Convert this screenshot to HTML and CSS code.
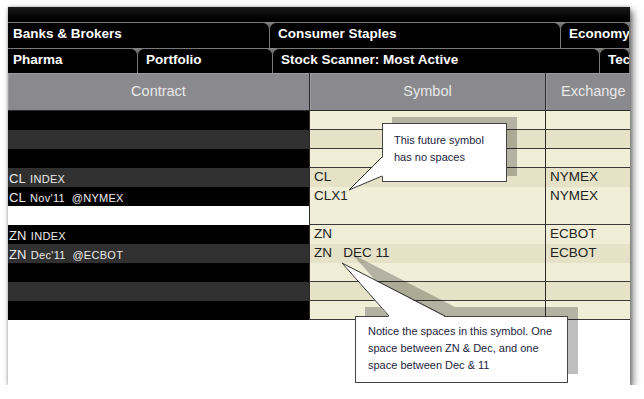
FILE: index.html
```html
<!DOCTYPE html>
<html lang="en">
<head>
    <meta charset="UTF-8">
    <title>Futures symbols</title>
    <link rel="stylesheet" href="styles.css">
</head>
<body>
    <div class="shot">
        <div class="topbar"></div>

        <div class="tabs">
            <div class="tab first w-banks">Banks &amp; Brokers</div>
            <div class="tab w-consumer">Consumer Staples</div>
            <div class="tab w-rest">Economy</div>
        </div>
        <div class="tabs tabs-2">
            <div class="tab first w-pharma">Pharma</div>
            <div class="tab w-portfolio">Portfolio</div>
            <div class="tab w-scanner">Stock Scanner: Most Active</div>
            <div class="tab w-rest">Tec</div>
        </div>

        <div class="grid-head">
            <div class="hcell">Contract</div>
            <div class="hcell">Symbol</div>
            <div class="hcell h-exc">Exchange</div>
        </div>

        <div class="grid-body">
            <div class="row"><div class="c-con"></div><div class="c-sym"></div><div class="c-exc"></div></div>
            <div class="row alt"><div class="c-con"></div><div class="c-sym"></div><div class="c-exc"></div></div>
            <div class="row"><div class="c-con"></div><div class="c-sym"></div><div class="c-exc"></div></div>
            <div class="row alt"><div class="c-con"><span class="big">CL</span> <span class="small">INDEX</span></div><div class="c-sym">CL</div><div class="c-exc">NYMEX</div></div>
            <div class="row"><div class="c-con"><span class="big">CL</span> <span class="small">Nov'11  @NYMEX</span></div><div class="c-sym">CLX1</div><div class="c-exc">NYMEX</div></div>
            <div class="row sel"><div class="c-con"></div><div class="c-sym"></div><div class="c-exc"></div></div>
            <div class="row"><div class="c-con"><span class="big">ZN</span> <span class="small">INDEX</span></div><div class="c-sym">ZN</div><div class="c-exc">ECBOT</div></div>
            <div class="row alt"><div class="c-con"><span class="big">ZN</span> <span class="small">Dec'11  @ECBOT</span></div><div class="c-sym">ZN   DEC 11</div><div class="c-exc">ECBOT</div></div>
            <div class="row"><div class="c-con"></div><div class="c-sym"></div><div class="c-exc"></div></div>
            <div class="row alt"><div class="c-con"></div><div class="c-sym"></div><div class="c-exc"></div></div>
            <div class="row"><div class="c-con"></div><div class="c-sym"></div><div class="c-exc"></div></div>
        </div>

        <!-- callouts drawn over the grid -->
        <div class="note note-1">This future symbol<br>has no spaces</div>
        <div class="note note-2">Notice the spaces in this symbol. One<br>space between ZN &amp; Dec, and one<br>space between Dec &amp; 11</div>

        <svg class="pointers" width="622" height="378" viewBox="0 0 622 378">
            <polygon points="344,247 391,300 447,300" fill="rgba(0,0,0,0.25)"/>
            <polygon points="375,150 341,183 375,169" fill="#fff"/>
            <polyline points="374,150 341,183 374,169" fill="none" stroke="#333" stroke-width="1"/>
            <polygon points="381,310 334,256 437,310" fill="#fff"/>
            <polyline points="381,309 334,256 437,309" fill="none" stroke="#333" stroke-width="1"/>
        </svg>
    </div>
</body>
</html>
```

FILE: styles.css
```css
body {
    margin: 0;
    background: #fff;
    font-family: "Liberation Sans", Arial, sans-serif;
}
.shot {
    position: relative;
    margin: 7px 0 0 8px;
    width: 622px;
    height: 378px;
    overflow: hidden;
    background: #fff;
    box-shadow: 3px 4px 7px rgba(0,0,0,0.55), 0 0 3px rgba(0,0,0,0.3);
}
.topbar {
    height: 15px;
    background: linear-gradient(#1c1c1c, #000 12px);
}
.tabs {
    display: flex;
    height: 26px;
    background: linear-gradient(#8c8c8c, #555 5px, #000 8px);
}
.tabs-2 {
    height: 25px;
}
.tab {
    flex: none;
    box-sizing: border-box;
    height: 100%;
    margin-left: -1px;
    padding: 3px 0 0 8px;
    border: 1px solid #7a7a7a;
    border-bottom: none;
    border-radius: 7px 7px 0 0;
    background: #000;
    color: #fff;
    font-weight: bold;
    font-size: 13.5px;
    white-space: nowrap;
    overflow: hidden;
}
.tab.first {
    margin-left: 0;
    padding-left: 5px;
    border-left: none;
    border-top-left-radius: 0;
}
.w-banks { width: 262px; }
.w-consumer { width: 292px; }
.w-pharma { width: 130px; }
.w-portfolio { width: 136px; }
.w-scanner { width: 328px; }
.w-rest { flex: 1; }

.grid-head {
    display: grid;
    grid-template-columns: 301px 236px 1fr;
    height: 37px;
    background: #8a8a8e;
    border-bottom: 1px solid #2a2a2a;
}
.hcell {
    border-left: 1px solid #2a2a2a;
    color: #e8e8e8;
    font-size: 14.5px;
    line-height: 37px;
    text-align: center;
    box-shadow: inset 1px 1px 0 #9c9ca0;
}
.hcell:first-child {
    border-left: none;
}
.h-exc {
    text-align: left;
    padding-left: 15px;
}
.row {
    display: grid;
    grid-template-columns: 301px 236px 1fr;
    height: 19px;
}
.c-con {
    background: #000;
    color: #ececec;
    padding-left: 1px;
    line-height: 19px;
    white-space: pre;
}
.row.alt .c-con {
    background: #303030;
}
.row.sel .c-con {
    background: #fff;
}
.big {
    font-size: 13px;
}
.small {
    font-size: 11px;
    letter-spacing: 0.3px;
}
.c-sym,
.c-exc {
    box-sizing: border-box;
    background: #f1eed8;
    border-left: 1px solid #2b2b2b;
    border-bottom: 1px solid #3a3a3a;
    color: #222;
    font-size: 13.5px;
    line-height: 18px;
    padding-left: 4px;
    white-space: pre;
}
.row.alt .c-sym,
.row.alt .c-exc {
    background: #e6e2c7;
}
.note {
    position: absolute;
    box-sizing: border-box;
    background: #fff;
    border: 1px solid #444;
    color: #1d1d3d;
    font-size: 11px;
    line-height: 17px;
}
.note-1 {
    left: 374px;
    top: 116px;
    width: 125px;
    height: 59px;
    padding: 8px 0 0 11px;
    box-shadow: 10px -6px 0 rgba(0,0,0,0.25);
}
.note-2 {
    left: 347px;
    top: 309px;
    width: 213px;
    height: 67px;
    padding: 6px 0 0 12px;
    box-shadow: 10px -9px 0 rgba(0,0,0,0.25);
}
.pointers {
    position: absolute;
    left: 0;
    top: 0;
}
```
